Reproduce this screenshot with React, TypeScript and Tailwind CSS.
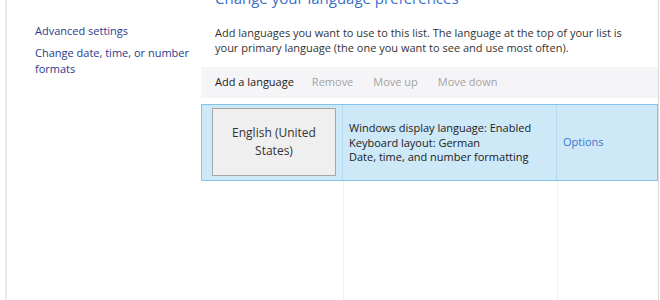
import React from "react";

const font = { fontFamily: '"Segoe UI", "Open Sans", "Noto Sans", sans-serif' };

export default function App() {
  return (
    <div className="w-[660px] h-[300px] bg-white relative overflow-hidden flex" style={font}>
      <div className="w-[5px] shrink-0" />
      <div className="w-[2px] shrink-0 bg-[#e9e9e9] h-full" />
      {/* left nav */}
      <div className="w-[194px] shrink-0 pl-[28px] pt-[23px] text-[11px] leading-[16px] text-[#283a8c]">
        <div>Advanced settings</div>
        <div className="mt-[6px] w-[160px]">Change date, time, or number formats</div>
      </div>
      {/* main */}
      <div className="w-[457px] shrink-0 flex flex-col">
        <div className="pl-[14px] mt-[-12px] text-[15px] leading-[20px] text-[#3a6fc6]">
          Change your language preferences
        </div>
        <div className="pl-[14px] mt-[17px] text-[11px] leading-[15px] text-[#333] w-[440px]">
          Add languages you want to use to this list. The language at the top of your list is your primary language (the one you want to see and use most often).
        </div>
        <div className="mt-[12px] h-[31px] bg-[#f5f5f7] flex items-center pl-[14px] text-[11px]">
          <span className="text-[#222]">Add a language</span>
          <span className="ml-[18px] text-[#a3a3a3]">Remove</span>
          <span className="ml-[20px] text-[#a3a3a3]">Move up</span>
          <span className="ml-[20px] text-[#a3a3a3]">Move down</span>
        </div>
        <div className="h-[6px]" />
        <div className="h-[77px] border border-[#82c4ec] bg-[#cde8f7] flex">
          <div className="w-[141px] shrink-0 pl-[10px] pt-[3px] border-r border-[#b5daf2]">
            <div className="w-[124px] h-[68px] bg-[#efefef] border border-[#a6a6a6] flex items-center justify-center text-center text-[12px] leading-[18px] text-[#333]">
              <span>English (United<br />States)</span>
            </div>
          </div>
          <div className="w-[214px] shrink-0 pl-[6px] pt-[16px] text-[11px] leading-[14.5px] text-[#222] border-r border-[#b5daf2]">
            <div>Windows display language: Enabled</div>
            <div>Keyboard layout: German</div>
            <div>Date, time, and number formatting</div>
          </div>
          <div className="flex-1 pl-[6px] flex items-center text-[11px] text-[#3a78d0]">Options</div>
        </div>
        <div className="flex-1 flex">
          <div className="w-[142px] shrink-0" />
          <div className="w-[214px] shrink-0 border-l border-[#eaf1fb]" />
          <div className="flex-1 border-l border-[#eaf1fb]" />
        </div>
      </div>
      <div className="w-px shrink-0 bg-[#d9d9d9] h-full" />
    </div>
  );
}
